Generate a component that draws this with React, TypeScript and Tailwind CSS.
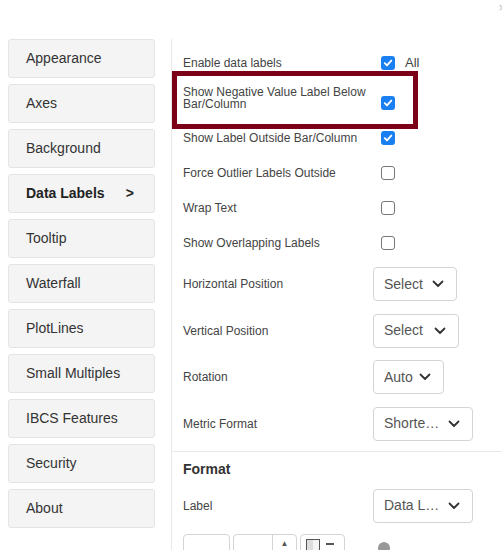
import React from "react";

const navItems = [
  "Appearance",
  "Axes",
  "Background",
  "Data Labels",
  "Tooltip",
  "Waterfall",
  "PlotLines",
  "Small Multiples",
  "IBCS Features",
  "Security",
  "About",
];

function Check({ checked }: { checked: boolean }) {
  if (checked) {
    return (
      <span className="flex h-[14px] w-[14px] shrink-0 items-center justify-center rounded-[3px] bg-[#1a7ff0]">
        <svg width="10" height="10" viewBox="0 0 10 10">
          <path d="M1.8 5.2 L4 7.4 L8.3 2.6" fill="none" stroke="#fff" strokeWidth="1.9" strokeLinecap="round" strokeLinejoin="round" />
        </svg>
      </span>
    );
  }
  return <span className="block h-[14px] w-[14px] shrink-0 rounded-[3px] border border-[#767676] bg-white" />;
}

function Chevron() {
  return (
    <svg width="12" height="8" viewBox="0 0 12 8">
      <path d="M1.5 1.5 L6 6 L10.5 1.5" fill="none" stroke="#333" strokeWidth="1.8" strokeLinecap="round" strokeLinejoin="round" />
    </svg>
  );
}

function Select({ text, w }: { text: string; w: string }) {
  return (
    <div className={`flex h-[34px] shrink-0 items-center justify-between rounded-[4px] border border-[#d4d4d4] bg-white pl-[10px] pr-[12px] ${w}`}>
      <span className="text-[14px] text-[#555]">{text}</span>
      <Chevron />
    </div>
  );
}

export default function App() {
  return (
    <div
      className="relative flex h-[550px] w-[502px] overflow-hidden bg-white text-[#333]"
      style={{ fontFamily: '"Liberation Sans", Arial, sans-serif' }}
    >
      <span className="absolute right-[-4px] top-[1px] text-[13px] leading-none text-[#bbb]">×</span>

      {/* Left nav */}
      <div className="flex w-[171px] shrink-0 flex-col gap-[6px] pl-[8px] pt-[39px]">
        {navItems.map((item) => (
          <div
            key={item}
            className="flex h-[39px] w-[147px] shrink-0 items-center rounded-[3px] border border-[#e4e4e4] bg-[#f4f4f4] pl-[17px] text-[14px]"
          >
            {item === "Data Labels" ? (
              <span className="flex w-[108px] justify-between font-bold text-[#222]">
                <span>Data Labels</span>
                <span>&gt;</span>
              </span>
            ) : (
              <span>{item}</span>
            )}
          </div>
        ))}
      </div>

      {/* Right panel */}
      <div className="mt-[39px] flex flex-1 flex-col border-l border-[#e8e8e8] text-[12px] text-[#444]">
        <div className="mt-[6px] flex h-[35px] shrink-0 items-center pl-[11px]">
          <span className="w-[198px]">Enable data labels</span>
          <Check checked />
          <span className="ml-[10px] text-[13px]">All</span>
        </div>

        <div className="relative flex h-[40px] shrink-0 items-start pl-[11px]">
          <span className="mt-[6px] w-[198px] leading-[12px]">
            Show Negative Value Label Below
            <br />
            Bar/Column
          </span>
          <span className="mt-[16px]">
            <Check checked />
          </span>
          <div className="absolute left-[0px] top-[-9px] h-[58px] w-[246px] border-[5px] border-[#7d0019]" />
        </div>

        {["Show Label Outside Bar/Column", "Force Outlier Labels Outside", "Wrap Text", "Show Overlapping Labels"].map(
          (l, i) => (
            <div key={l} className="flex h-[35px] shrink-0 items-center pl-[11px]">
              <span className="w-[198px]">{l}</span>
              <Check checked={i === 0} />
            </div>
          )
        )}

        <div className="mt-[1px] flex shrink-0 flex-col">
          {[
            ["Horizontal Position", "Select", "w-[84px]"],
            ["Vertical Position", "Select", "w-[86px]"],
            ["Rotation", "Auto", "w-[71px]"],
            ["Metric Format", "Shorte…", "w-[100px]"],
          ].map(([l, t, w]) => (
            <div key={l} className="flex h-[46.5px] shrink-0 items-center pl-[11px]">
              <span className="w-[190px]">{l}</span>
              <Select text={t} w={w} />
            </div>
          ))}
        </div>

        <div className="mt-[4px] shrink-0 border-t border-[#e8e8e8]" />

        <div className="flex h-[34px] shrink-0 items-center pl-[11px] text-[14px] font-bold text-[#333]">Format</div>

        <div className="flex h-[39px] shrink-0 items-center pl-[11px]">
          <span className="w-[190px]">Label</span>
          <Select text="Data L…" w="w-[100px]" />
        </div>

        <div className="mt-[9px] flex shrink-0 items-start gap-[3px] pl-[11px]">
          <div className="flex h-[34px] w-[47px] shrink-0 items-start justify-center rounded-[4px] border border-[#d4d4d4] pt-[10px] text-[13px]">
            A
          </div>
          <div className="flex h-[34px] w-[64px] shrink-0 rounded-[4px] border border-[#d4d4d4]">
            <span className="flex-1 pl-[10px] pt-[10px] text-[13px]">10</span>
            <span className="flex w-[24px] justify-center border-l border-[#d4d4d4] pt-[3px] text-[8px] text-[#555]">▲</span>
          </div>
          <div className="flex h-[34px] w-[45px] shrink-0 items-start gap-[6px] rounded-[4px] border border-[#d4d4d4] pl-[5px] pt-[4px]">
            <span className="block h-[14px] w-[14px] border border-[#555] bg-[linear-gradient(90deg,#ddd_50%,#f4f4f4_50%)]" />
            <span className="mt-[4px] block h-[2px] w-[8px] bg-[#555]" />
          </div>
          <span className="ml-[30px] mt-[8px] block h-[12px] w-[12px] shrink-0 rounded-full bg-[#999]" />
        </div>
      </div>
    </div>
  );
}
